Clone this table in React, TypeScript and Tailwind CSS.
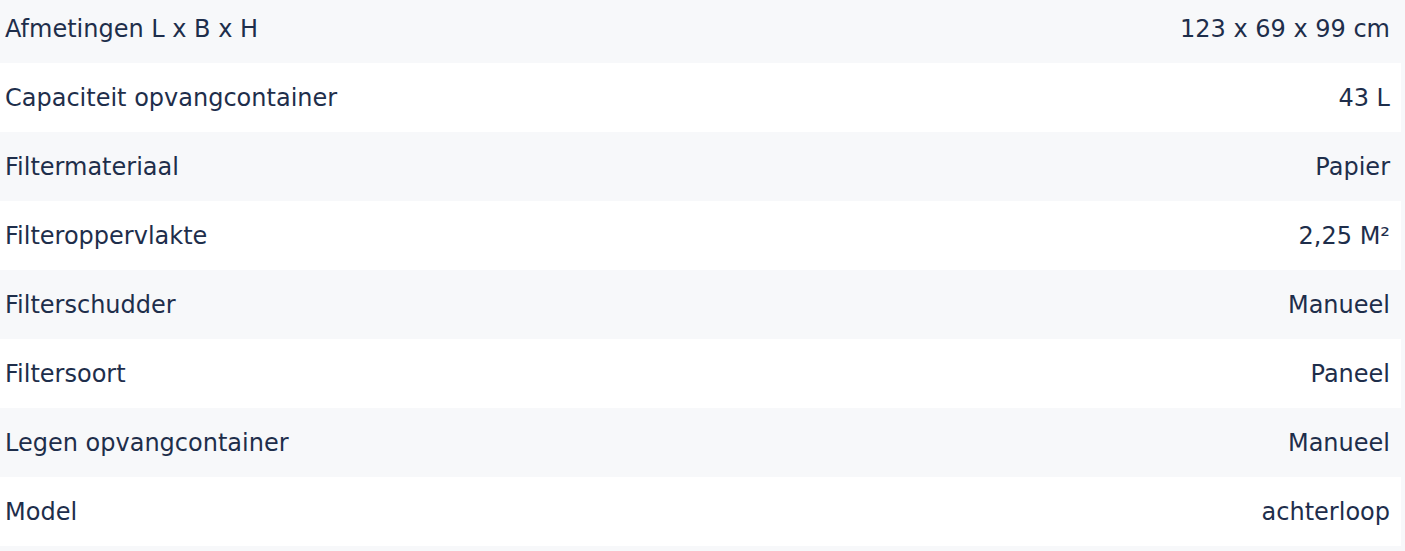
import React from "react";

const rows: [string, React.ReactNode][] = [
  ["Afmetingen L x B x H", "123 x 69 x 99 cm"],
  ["Capaciteit opvangcontainer", "43 L"],
  ["Filtermateriaal", "Papier"],
  ["Filteroppervlakte", "2,25 M²"],
  ["Filterschudder", "Manueel"],
  ["Filtersoort", "Paneel"],
  ["Legen opvangcontainer", "Manueel"],
  ["Model", "achterloop"],
];

export default function App() {
  return (
    <div className="w-[1405px] h-[551px] overflow-hidden bg-[#f7f8fa] font-['DejaVu_Sans',sans-serif] text-[24px] text-[#1e2e4b]">
      <div className="-mt-[6px] mr-[4px] flex flex-col">
        {rows.map(([k, v], i) => (
          <div
            key={k}
            className={`flex h-[69px] items-center justify-between pl-[5px] pr-[11px] ${i % 2 === 0 ? "bg-[#f7f8fa]" : "bg-white"}`}
          >
            <span>{k}</span>
            <span>{v}</span>
          </div>
        ))}
      </div>
    </div>
  );
}
